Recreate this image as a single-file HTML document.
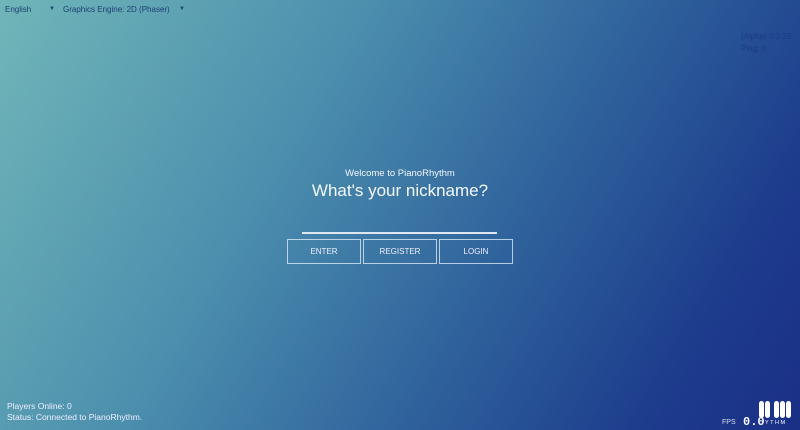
<!DOCTYPE html>
<html><head><meta charset="utf-8"><style>
*{margin:0;padding:0;box-sizing:border-box}
html,body{width:800px;height:430px;overflow:hidden}
body{font-family:"Liberation Sans",sans-serif;background:linear-gradient(120deg,#70b6b8 0%,#4c8fae 35%,#2f629c 62%,#1d3c8c 85%,#1a2f86 100%);position:relative;color:#fff}
.t{position:absolute;white-space:nowrap}
.btn{position:absolute;top:239px;width:74px;height:25px;border:1px solid rgba(230,240,250,.75);color:#eef;font-size:8px;text-align:center;line-height:23px}
.k{width:5px;height:17px;background:#fff;border-radius:2.5px}
</style></head><body>
<div class="t" style="left:5px;top:5px;font-size:8px;color:#1f3f73">English</div>
<div class="t" style="left:49px;top:6px;font-size:6px;color:#1f3f73">▼</div>
<div class="t" style="left:63px;top:5px;font-size:8px;color:#1f3f73">Graphics Engine: 2D (Phaser)</div>
<div class="t" style="left:179px;top:6px;font-size:6px;color:#1f3f73">▼</div>
<div class="t" style="left:741px;top:31px;font-size:8px;color:#1c3a86;line-height:12px">(Alpha) 0.3.22<br>Ping: 0</div>
<div class="t" style="left:0;width:800px;text-align:center;top:168px;font-size:9.5px;color:#f2f6fa">Welcome to PianoRhythm</div>
<div class="t" style="left:0;width:800px;text-align:center;top:181px;font-size:17px;color:#f4f8fb">What's your nickname?</div>
<div style="position:absolute;left:302px;top:232px;width:195px;height:2px;background:#dfe8f2"></div>
<div class="btn" style="left:287px">ENTER</div>
<div class="btn" style="left:363px">REGISTER</div>
<div class="btn" style="left:439px">LOGIN</div>
<div class="t" style="left:7px;top:401px;font-size:8.5px;color:#eef;line-height:10.5px">Players Online: 0<br>Status: Connected to PianoRhythm.</div>
<div class="t" style="left:722px;top:419px;font-size:7px;color:#dde">FPS</div>
<div class="t" style="left:743px;top:415px;font-size:12px;font-family:'Liberation Mono',monospace;font-weight:bold;color:#fff">0.0</div>
<div class="t" style="left:765px;top:420px;font-size:5.5px;color:#fff;letter-spacing:1.5px">YTHM</div>
<div style="position:absolute;left:759px;top:401px;display:flex;gap:1px">
<div class="k"></div><div class="k" style="margin-right:3px"></div>
<div class="k"></div><div class="k"></div><div class="k"></div>
</div>
</body></html>
